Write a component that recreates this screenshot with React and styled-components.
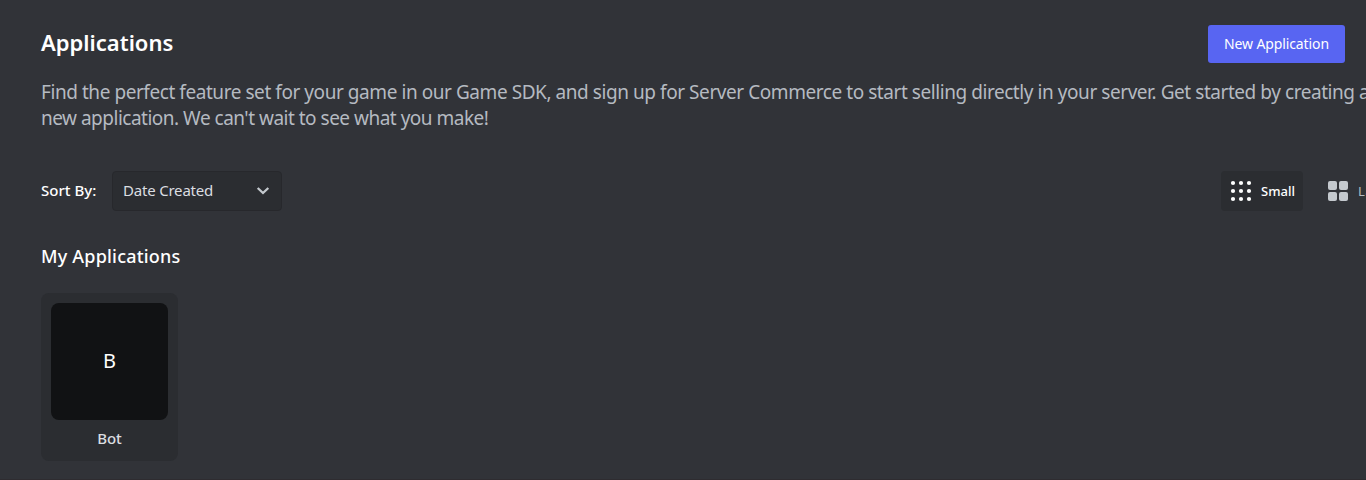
import React from "react";
import styled, { createGlobalStyle, css } from "styled-components";

const GlobalStyle = createGlobalStyle`
  *, *::before, *::after { box-sizing: border-box; }
  html, body { margin: 0; background: #313338; overflow: hidden; }
  body { font-family: "Noto Sans", "Open Sans", sans-serif; color: #fff; }
  h1, h2, p { margin: 0; }
  button { font-family: inherit; cursor: pointer; margin: 0; }
`;

const Page = styled.main`
  width: 1366px;
  height: 480px;
  padding: 25px 0 0 41px;
  display: flex;
  flex-direction: column;
  overflow: hidden;
  background: #313338;
  border-bottom: 1px solid #2e2c30;
`;

const Header = styled.header`
  display: flex;
  justify-content: space-between;
  height: 38px;
  padding-right: 21px;
`;

const Title = styled.h1`
  font-size: 22px;
  line-height: 34px;
  font-weight: 600;
`;

const PrimaryButton = styled.button`
  width: 137px;
  height: 38px;
  padding: 0 0 1px;
  border: 0;
  border-radius: 3px;
  background: #5865f2;
  color: #fff;
  font-size: 14px;
  font-weight: 400;
  letter-spacing: -0.12px;
  white-space: nowrap;
`;

const Intro = styled.p`
  margin-top: 16px;
  width: 1340px;
  color: #b5bac1;
  font-size: 19px;
  line-height: 26px;
  white-space: nowrap;
`;

const Line = styled.span`
  display: block;
  letter-spacing: ${({ $tracking }) => $tracking}px;
`;

const Toolbar = styled.div`
  display: flex;
  justify-content: space-between;
  align-items: center;
  width: 1340px;
  height: 40px;
  margin-top: 40px;
`;

const SortGroup = styled.div`
  display: flex;
  align-items: center;
`;

const SortLabel = styled.span`
  width: 71px;
  padding-bottom: 2px;
  font-size: 15px;
  font-weight: 500;
  white-space: nowrap;
`;

const Select = styled.button`
  display: flex;
  align-items: center;
  justify-content: space-between;
  width: 170px;
  height: 40px;
  padding: 0 9px 0 10px;
  border: 1px solid #27282c;
  border-radius: 4px;
  background: #2b2d31;
  color: #dbdee1;
  font-size: 15px;
  letter-spacing: -0.2px;
  white-space: nowrap;
`;

const SelectValue = styled.span`
  padding-bottom: 2px;
`;

const ViewGroup = styled.div`
  display: flex;
  gap: 15px;
  width: 160px;
  flex: none;
`;

const ViewButton = styled.button`
  display: flex;
  flex: none;
  align-items: center;
  gap: 10px;
  height: 40px;
  padding: 0 0 0 10px;
  border: 0;
  border-radius: 4px;
  background: transparent;
  color: #b5bac1;
  font-size: 13px;
  font-weight: 400;
  letter-spacing: 0.6px;
  white-space: nowrap;
  ${({ $active }) =>
    $active &&
    css`
      width: 82px;
      background: #2b2d31;
      color: #fff;
      font-weight: 500;
      letter-spacing: 0;
    `}
`;

const Section = styled.section`
  margin-top: 32px;
`;

const SectionTitle = styled.h2`
  font-size: 18px;
  line-height: 26px;
  font-weight: 500;
  letter-spacing: 0.2px;
`;

const Card = styled.article`
  width: 137px;
  height: 168px;
  margin-top: 24px;
  padding: 10px;
  border-radius: 8px;
  background: #2b2d31;
  text-align: center;
`;

const AppIcon = styled.div`
  display: flex;
  align-items: center;
  justify-content: center;
  height: 117px;
  padding-bottom: 2px;
  border-radius: 8px;
  background: #111214;
  font-size: 20px;
`;

const AppName = styled.div`
  margin-top: 7px;
  color: #dbdee1;
  font-size: 15px;
  line-height: 22px;
  font-weight: 500;
`;

const DotsIcon = () => (
  <svg width="20" height="20" viewBox="0 0 20 20" fill="currentColor" overflow="visible">
    {[2, 10, 18].map((y) =>
      [2, 10, 18].map((x) => <circle key={`${x}-${y}`} cx={x} cy={y} r="2.1" />)
    )}
  </svg>
);

const GridIcon = () => (
  <svg width="20" height="20" viewBox="0 0 20 20" fill="#c4c9ce">
    {[0, 11].map((y) =>
      [0, 11].map((x) => (
        <rect key={`${x}-${y}`} x={x} y={y} width="9" height="9" rx="2" />
      ))
    )}
  </svg>
);

const ChevronIcon = () => (
  <svg width="18" height="18" viewBox="0 0 18 18" fill="none">
    <path d="M3.7 6L9 11L14.3 6" stroke="#c4c9ce" strokeWidth="2.3" />
  </svg>
);

export default function App() {
  return (
    <>
      <GlobalStyle />
      <Page>
        <Header>
          <Title>Applications</Title>
          <PrimaryButton>New Application</PrimaryButton>
        </Header>
        <Intro>
          <Line $tracking={-0.44}>
            Find the perfect feature set for your game in our Game SDK, and sign
            up for Server Commerce to start selling directly in your server. Get
            started by creating a
          </Line>
          <Line $tracking={-0.5}>
            new application. We can't wait to see what you make!
          </Line>
        </Intro>
        <Toolbar>
          <SortGroup>
            <SortLabel>Sort By:</SortLabel>
            <Select>
              <SelectValue>Date Created</SelectValue>
              <ChevronIcon />
            </Select>
          </SortGroup>
          <ViewGroup>
            <ViewButton $active>
              <DotsIcon />
              Small
            </ViewButton>
            <ViewButton>
              <GridIcon />
              Large
            </ViewButton>
          </ViewGroup>
        </Toolbar>
        <Section>
          <SectionTitle>My Applications</SectionTitle>
          <Card>
            <AppIcon>B</AppIcon>
            <AppName>Bot</AppName>
          </Card>
        </Section>
      </Page>
    </>
  );
}
